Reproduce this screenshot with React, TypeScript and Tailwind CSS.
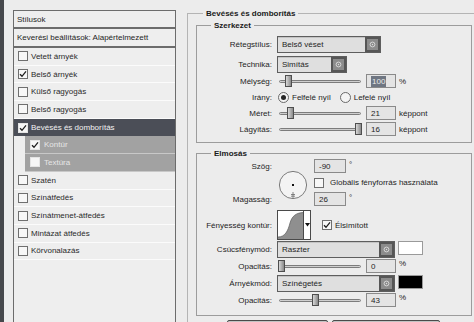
import React from 'react'

const font = "font-['Liberation_Sans',Arial,sans-serif]"

function Check({ checked, light }: { checked?: boolean; light?: boolean }) {
	return (
		<span
			className={`flex h-[10px] w-[10px] shrink-0 items-center justify-center border ${
				light ? 'border-[#e4e4e4] bg-[#f6f6f6]' : 'border-[#6f6f6f] bg-[#f7f7f7]'
			}`}
		>
			{checked && (
				<svg width="8" height="8" viewBox="0 0 8 8">
					<path d="M1 4.2 L3 6.3 L7 1.4" fill="none" stroke="#1d1d1d" strokeWidth="1.3" />
				</svg>
			)}
		</span>
	)
}

function Radio({ on }: { on?: boolean }) {
	return (
		<span className="flex h-[11px] w-[11px] shrink-0 items-center justify-center rounded-full border border-[#6a6a6a] bg-[#f4f4f4]">
			{on && <span className="h-[5px] w-[5px] rounded-full bg-[#262626]" />}
		</span>
	)
}

function SelectBox({ value, className }: { value: string; className: string }) {
	return (
		<div className={`flex h-[17px] border border-[#5e5e5e] bg-[#dfdfdf] ${className}`}>
			<div className="flex flex-1 items-center pl-[4px] shadow-[inset_0_1px_0_#c4c4c4]">{value}</div>
			<div className="flex w-[15px] items-center justify-center bg-[#565656]">
				<span className="flex h-[11px] w-[11px] items-center justify-center bg-[#8c8c8c]">
					<svg width="7" height="7" viewBox="0 0 7 7">
						<circle cx="3.5" cy="3.5" r="2.4" fill="none" stroke="#dcdcdc" strokeWidth="0.9" />
						<circle cx="3.5" cy="3.5" r="0.7" fill="#dcdcdc" />
					</svg>
				</span>
			</div>
		</div>
	)
}

function Slider({ pos }: { pos: number }) {
	return (
		<div className="relative flex h-[12px] w-[84px] shrink-0 items-center">
			<div className="ml-[1px] h-[3px] w-[82px] rounded-full border border-[#7c7c7c] bg-[#cfcfcf]" />
			<div
				className="absolute top-0 h-[12px] w-[7px] border border-[#4e4e4e] bg-gradient-to-r from-[#d8d8d8] to-[#8a8a8a]"
				style={{ left: pos }}
			/>
		</div>
	)
}

function NumBox({ value, selected, className = 'w-[30px]' }: { value: string; selected?: boolean; className?: string }) {
	return (
		<div className={`flex h-[14px] shrink-0 items-center border border-[#8a8a8a] bg-[#e4e4e4] pl-[4px] ${className}`}>
			{selected ? <span className="bg-[#6f7682] px-[1px] text-[#ececec]">{value}</span> : value}
		</div>
	)
}

function Label({ children }: { children: React.ReactNode }) {
	return <div className="w-[76px] shrink-0 pr-[1px] text-right">{children}</div>
}

function StyleRow({ label, checked, variant = 'normal' }: { label: string; checked?: boolean; variant?: 'normal' | 'active' | 'sub' }) {
	if (variant === 'sub') {
		return (
			<div className="ml-[11px] flex h-[17.7px] items-center gap-[4px] border-b border-[#c8c8c8] bg-[#a2a2a2] pl-[5px] text-[#e6e6e6]">
				<Check checked={checked} light />
				{label}
			</div>
		)
	}
	if (variant === 'active') {
		return (
			<div className="flex h-[17.7px] items-center gap-[3px] bg-[#4b4e57] pl-[4px] text-[#f2f2f2]">
				<Check checked={checked} light />
				{label}
			</div>
		)
	}
	return (
		<div className="flex h-[17.7px] items-center gap-[3px] border-b border-[#fbfbfb] pl-[4px] text-[#2a2a2a]">
			<Check checked={checked} />
			{label}
		</div>
	)
}

export default function App() {
	return (
		<div className={`flex h-[322px] w-[474px] overflow-hidden bg-[#ececec] text-[8px] leading-[11px] text-[#1e1e1e] ${font}`}>
			<div className="w-[4px] shrink-0 bg-[#46484c]" />

			{/* styles list */}
			<div className="ml-[9px] mt-[10px] h-[330px] w-[163px] shrink-0 border border-[#6c6c6c] bg-[#eeeeee]">
				<div className="flex h-[18px] items-center border-b-2 border-[#6c6c6c] pl-[3px]">Stílusok</div>
				<div className="flex h-[19px] items-center border-b-2 border-[#6c6c6c] pl-[3px]">Keverési beállítások: Alapértelmezett</div>
				<StyleRow label="Vetett árnyék" />
				<StyleRow label="Belső árnyék" checked />
				<StyleRow label="Külső ragyogás" />
				<StyleRow label="Belső ragyogás" />
				<StyleRow label="Bevésés és domborítás" checked variant="active" />
				<StyleRow label="Kontúr" checked variant="sub" />
				<StyleRow label="Textúra" variant="sub" />
				<StyleRow label="Szatén" />
				<StyleRow label="Színátfedés" />
				<StyleRow label="Színátmenet-átfedés" />
				<StyleRow label="Mintázat átfedés" />
				<StyleRow label="Körvonalazás" />
			</div>

			{/* settings */}
			<fieldset className="ml-[11px] mt-[8px] h-[340px] w-[300px] shrink-0 border border-[#b4b4b4]">
				<legend className="ml-[15px] px-[3px] font-bold text-[#1a1a1a]">Bevésés és domborítás</legend>

				<fieldset className="ml-[8px] mt-[1px] w-[276px] border border-[#9c9c9c] pb-[5px]">
					<legend className="ml-[14px] px-[3px] font-bold text-[#1a1a1a]">Szerkezet</legend>
					<div className="mt-[5px] flex items-center">
						<Label>Rétegstílus:</Label>
						<SelectBox value="Belső véset" className="ml-[4px] w-[104px]" />
					</div>
					<div className="mt-[3px] flex items-center">
						<Label>Technika:</Label>
						<SelectBox value="Simítás" className="ml-[4px] w-[70px]" />
					</div>
					<div className="flex h-[16px] items-center">
						<Label>Mélység:</Label>
						<div className="ml-[5px]">
							<Slider pos={7} />
						</div>
						<div className="ml-[4px]">
							<NumBox value="100" selected />
						</div>
						<span className="ml-[3px]">%</span>
					</div>
					<div className="flex h-[16px] items-center">
						<Label>Irány:</Label>
						<div className="ml-[5px] flex items-center gap-[3px]">
							<Radio on />
							Felfelé nyíl
						</div>
						<div className="ml-[9px] flex items-center gap-[3px]">
							<Radio />
							Lefelé nyíl
						</div>
					</div>
					<div className="flex h-[16px] items-center">
						<Label>Méret:</Label>
						<div className="ml-[5px]">
							<Slider pos={9} />
						</div>
						<div className="ml-[4px]">
							<NumBox value="21" />
						</div>
						<span className="ml-[3px]">képpont</span>
					</div>
					<div className="flex h-[16px] items-center">
						<Label>Lágyítás:</Label>
						<div className="ml-[5px]">
							<Slider pos={77} />
						</div>
						<div className="ml-[4px]">
							<NumBox value="16" />
						</div>
						<span className="ml-[3px]">képpont</span>
					</div>
				</fieldset>

				<fieldset className="ml-[8px] mt-[5px] w-[276px] border border-[#9c9c9c] pb-[7px]">
					<legend className="ml-[14px] px-[3px] font-bold text-[#1a1a1a]">Elmosás</legend>
					<div className="flex">
						<div className="flex w-[76px] shrink-0 flex-col justify-between pr-[1px] text-right">
							<div className="flex h-[14px] items-center justify-end">Szög:</div>
							<div className="flex h-[14px] items-center justify-end">Magasság:</div>
						</div>
						<svg className="ml-[5px] mt-[11px]" width="30" height="30" viewBox="0 0 30 30">
							<circle cx="15" cy="15" r="13.6" fill="#f3f3f3" stroke="#7b7b7b" strokeWidth="1" />
							<rect x="14" y="14" width="2" height="2" fill="#111" />
							<path d="M15 22 V28 M13 24.5 H17 M13 26.2 H17" stroke="#6a6a6a" strokeWidth="0.8" />
						</svg>
						<div className="ml-[6px] flex flex-col">
							<div className="flex items-center">
								<NumBox value="-90" className="w-[32px]" />
								<span className="ml-[3px] self-start">°</span>
							</div>
							<div className="flex h-[19px] items-center gap-[6px]">
								<Check />
								Globális fényforrás használata
							</div>
							<div className="flex items-center">
								<NumBox value="26" className="w-[32px]" />
								<span className="ml-[3px] self-start">°</span>
							</div>
						</div>
					</div>
					<div className="mt-[4px] flex items-center">
						<Label>Fényesség kontúr:</Label>
						<div className="ml-[4px] flex h-[30px] w-[34px] border border-[#4a4a4a] bg-white">
							<svg width="25" height="28" viewBox="0 0 25 28">
								<path d="M0 28 L0 26 C7 26 10 20 12 12 C14 5 18 2 25 1.5 L25 28 Z" fill="#8f8f8f" />
								<path d="M0 26 C7 26 10 20 12 12 C14 5 18 2 25 1.5" fill="none" stroke="#5a5a5a" strokeWidth="0.7" />
							</svg>
							<div className="flex flex-1 items-center justify-center border-l border-[#4a4a4a]">
								<svg width="5" height="4" viewBox="0 0 5 4">
									<path d="M0 0 H5 L2.5 3.5 Z" fill="#111" />
								</svg>
							</div>
						</div>
						<div className="ml-[11px] flex items-center gap-[3px]">
							<Check checked />
							Élsimított
						</div>
					</div>
					<div className="mt-[1px] flex items-center">
						<Label>Csúcsfénymód:</Label>
						<SelectBox value="Raszter" className="ml-[4px] w-[118px]" />
						<div className="ml-[3px] h-[14px] w-[25px] self-start border border-[#9a9a9a] bg-white" />
					</div>
					<div className="flex h-[16px] items-center">
						<Label>Opacitás:</Label>
						<div className="ml-[5px]">
							<Slider pos={0} />
						</div>
						<div className="ml-[4px]">
							<NumBox value="0" />
						</div>
						<span className="ml-[3px] self-start">%</span>
					</div>
					<div className="mt-[1px] flex items-center">
						<Label>Árnyékmód:</Label>
						<SelectBox value="Színégetés" className="ml-[4px] w-[118px]" />
						<div className="ml-[3px] h-[14px] w-[25px] self-start border border-[#9a9a9a] bg-black" />
					</div>
					<div className="flex h-[16px] items-center">
						<Label>Opacitás:</Label>
						<div className="ml-[5px]">
							<Slider pos={34} />
						</div>
						<div className="ml-[4px]">
							<NumBox value="43" />
						</div>
						<span className="ml-[3px] self-start">%</span>
					</div>
				</fieldset>

				<div className="ml-[39px] mt-[4px] flex gap-[4px]">
					<div className="h-[20px] w-[101px] rounded-[2px] border border-[#4a4a4a] bg-gradient-to-b from-[#c4c4c4] to-[#a4a4a4]" />
					<div className="h-[20px] w-[108px] rounded-[2px] border border-[#4a4a4a] bg-gradient-to-b from-[#c4c4c4] to-[#a4a4a4]" />
				</div>
			</fieldset>
		</div>
	)
}
